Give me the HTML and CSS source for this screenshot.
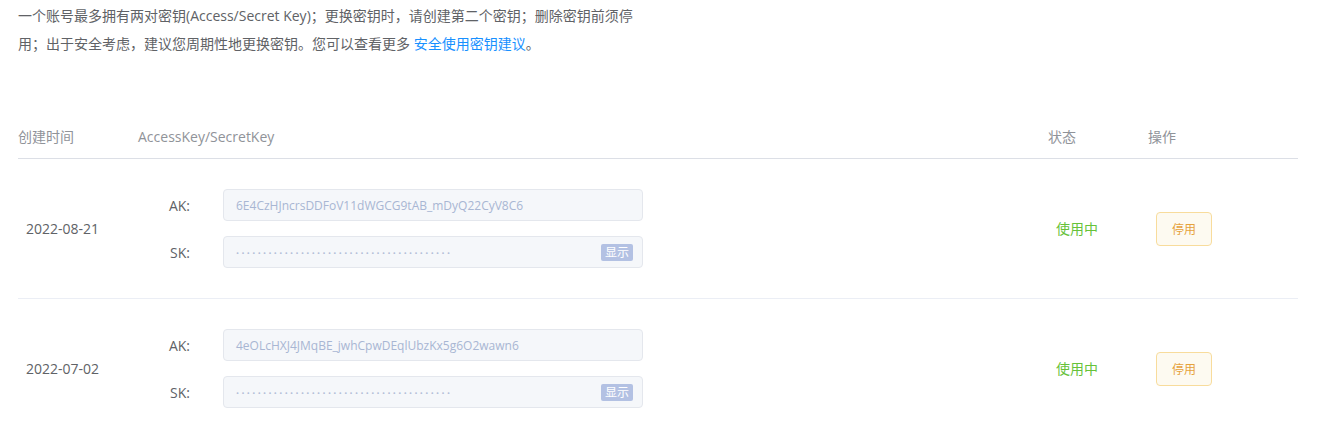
FILE: index.html
```html
<!DOCTYPE html>
<html lang="zh-CN">
<head>
<meta charset="utf-8">
<title>AccessKey</title>
<link rel="stylesheet" href="styles.css">
</head>
<body>
<div class="page">
  <p class="intro">一个账号最多拥有两对密钥(Access/Secret Key)；更换密钥时，请创建第二个密钥；删除密钥前须停用；出于安全考虑，建议您周期性地更换密钥。您可以查看更多 <a class="link" href="#">安全使用密钥建议</a>。</p>

  <div class="table">
    <div class="row head">
      <div class="cell">创建时间</div>
      <div class="cell">AccessKey/SecretKey</div>
      <div class="cell">状态</div>
      <div class="cell">操作</div>
    </div>

    <div class="row body">
      <div class="cell date">2022-08-21</div>
      <div class="cell keys">
        <div class="key-line">
          <span class="label">AK:</span>
          <div class="field"><span class="value">6E4CzHJncrsDDFoV11dWGCG9tAB_mDyQ22CyV8C6</span></div>
        </div>
        <div class="key-line">
          <span class="label">SK:</span>
          <div class="field"><span class="dots">••••••••••••••••••••••••••••••••••••••••</span><span class="show">显示</span></div>
        </div>
      </div>
      <div class="cell status">使用中</div>
      <div class="cell action"><button class="btn-warn">停用</button></div>
    </div>

    <div class="row body">
      <div class="cell date">2022-07-02</div>
      <div class="cell keys">
        <div class="key-line">
          <span class="label">AK:</span>
          <div class="field"><span class="value">4eOLcHXJ4JMqBE_jwhCpwDEqlUbzKx5g6O2wawn6</span></div>
        </div>
        <div class="key-line">
          <span class="label">SK:</span>
          <div class="field"><span class="dots">••••••••••••••••••••••••••••••••••••••••</span><span class="show">显示</span></div>
        </div>
      </div>
      <div class="cell status">使用中</div>
      <div class="cell action"><button class="btn-warn">停用</button></div>
    </div>
  </div>
</div>
</body>
</html>
```

FILE: styles.css
```css
* { box-sizing: border-box; }
html, body { margin: 0; padding: 0; background: #fff; }
body {
  font-family: "Open Sans", "Noto Sans CJK SC", sans-serif;
  font-size: 14px;
  color: #606266;
}
.page {
  padding: 2px 35px 0 18px;
}
.intro {
  margin: 0;
  width: 632px;
  line-height: 28px;
  color: #606266;
}
.link {
  color: #1890ff;
  text-decoration: none;
}
.table {
  margin-top: 56px;
}
.row {
  display: grid;
  grid-template-columns: 120px 910px 100px 150px;
  border-bottom: 1px solid #dcdfe6;
}
.head {
  height: 45px;
  align-items: center;
  color: #909399;
}
.body {
  height: 140px;
  align-items: center;
  border-bottom-color: #ebeef5;
}
.body .cell { padding-left: 8px; }
.date { color: #606266; padding-bottom: 1px; }
.keys {
  display: flex;
  flex-direction: column;
  gap: 15px;
}
.key-line {
  display: flex;
  align-items: center;
}
.label {
  width: 44px;
  text-align: right;
  margin-right: 33px;
  color: #606266;
}
.field {
  width: 420px;
  height: 32px;
  background: #f5f7fa;
  border: 1px solid #e4e7ed;
  border-radius: 4px;
  display: flex;
  align-items: center;
  justify-content: space-between;
  padding: 0 9px 0 12px;
  font-size: 12px;
  color: #a8b6d3;
}
.dots {
  font-size: 8px;
  letter-spacing: 2.4px;
  color: #b4bfd8;
}
.show {
  background: #b3c1e3;
  color: #fff;
  font-size: 12px;
  line-height: 17px;
  height: 17px;
  padding: 0 4px;
  border-radius: 2px;
}
.status { color: #67c23a; padding-bottom: 1px; }
.btn-warn {
  width: 56px;
  height: 34px;
  background: #fdfaf1;
  border: 1px solid #f8dc9c;
  border-radius: 4px;
  color: #e6a23c;
  font-family: inherit;
  font-size: 12px;
  padding: 0;
}
```
